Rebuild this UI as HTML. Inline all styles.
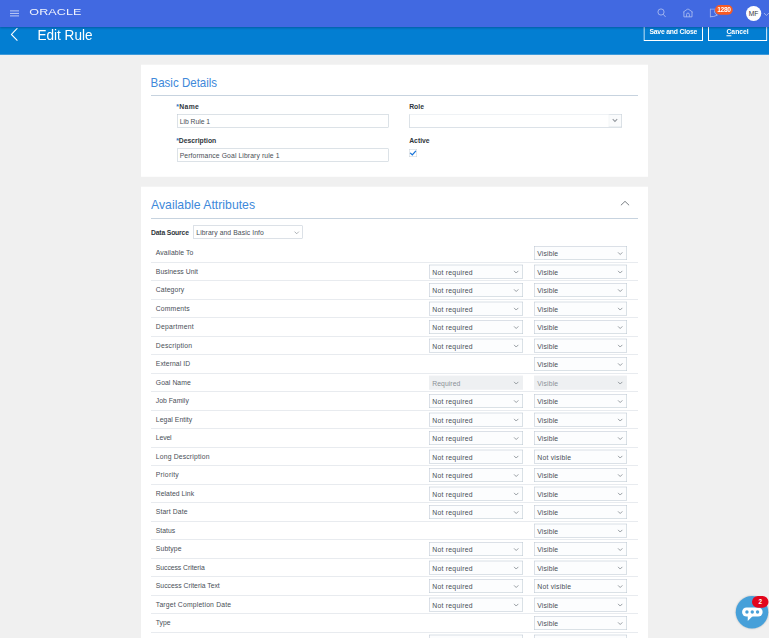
<!DOCTYPE html>
<html lang="en">
<head>
<meta charset="utf-8">
<title>Edit Rule</title>
<style>
html,body{margin:0;padding:0;}
body{width:769px;height:638px;overflow:hidden;background:#f0f0f0;font-family:"Liberation Sans",sans-serif;color:#3c4249;position:relative;}
*{box-sizing:border-box;}
.abs{position:absolute;}
#z{position:absolute;left:0;top:0;width:3076px;height:2552px;font-size:27.2px;transform:scale(.25);transform-origin:0 0;overflow:hidden;}
#topbar{position:absolute;left:0;top:0;width:3076px;height:108px;background:#4169e1;z-index:5;box-shadow:0 4px 8px rgba(0,0,40,.28);}
#bluebar{position:absolute;left:0;top:108px;width:3076px;height:110.8px;background:#037ed2;z-index:4;}
#logo{position:absolute;left:116.8px;top:26.4px;font-size:39.2px;line-height:40px;color:#fff;letter-spacing:0.4px;transform-origin:0 50%;transform:scaleX(1.28);font-weight:400;opacity:.93;}
#title{position:absolute;left:149.6px;top:104px;font-size:56px;transform:scaleX(0.9681);line-height:72px;color:#fff;white-space:nowrap;transform-origin:0 50%;}
.btn{position:absolute;top:80px;height:83.6px;border:4px solid #fff;color:#fff;font-weight:bold;font-size:27.2px;text-align:center;line-height:85.2px;white-space:nowrap;}
.panel{position:absolute;left:564px;width:2028px;background:#fff;}
.ptitle{position:absolute;left:37.6px;font-size:51.6px;line-height:64px;color:#4089da;white-space:nowrap;transform-origin:0 50%;}
.psep{position:absolute;left:40px;width:1948px;height:4px;background:#c7d3df;}
.flabel{position:absolute;font-weight:bold;font-size:27.2px;line-height:32px;color:#30363c;white-space:nowrap;}
.inp{position:absolute;height:52.8px;border:2.4px solid #b9c5d0;background:#fff;font-size:27.2px;line-height:50.4px;padding-left:8.8px;color:#4a4f55;white-space:nowrap;}
.row{position:absolute;left:40px;width:1948px;height:74px;border-bottom:2.4px solid #d0d7de;}
.lab{position:absolute;left:19.2px;top:20px;line-height:32px;font-size:27.2px;color:#484e56;white-space:nowrap;}
.sel{position:absolute;top:9.2px;height:54.8px;border:2.4px solid #b9c4cf;background:#fcfdfe;line-height:57.6px;font-size:27.2px;color:#484e56;white-space:nowrap;}
.sel span{position:absolute;left:11.2px;top:0;}
.s1{left:1112px;width:376px;}
.s2{left:1532px;width:372px;}
.sel.dis{background:#eef0f2;border-color:#eef0f2;color:#8b9197;}
.cv{position:absolute;right:14.8px;top:20px;width:21.6px;height:13.6px;overflow:visible;}
</style>
</head>
<body>
<div id="z">
<div id="topbar">
  <svg class="abs" style="left:40px;top:40px" width="40" height="28" viewBox="0 0 10 7"><path d="M0 .9H9M0 3.4H9M0 5.9H9" stroke="#e3e9fb" stroke-width=".8"/></svg>
  <div id="logo">ORACLE</div>
  <svg class="abs" style="left:2628px;top:32px" width="40" height="40" viewBox="0 0 10 10"><circle cx="4" cy="4" r="3.1" fill="none" stroke="#aebef1" stroke-width=".85"/><path d="M6.3 6.3L8.6 9" stroke="#aebef1" stroke-width=".85"/></svg>
  <svg class="abs" style="left:2730px;top:33.2px" width="44" height="40" viewBox="0 0 11 10"><path d="M.7 3.9L5.45 .6L10.2 3.9M1.4 3.5V8.6H9.5V3.5M4.05 8.6V6.2A1.4 1.4 0 0 1 6.85 6.2V8.6" fill="none" stroke="#aebef1" stroke-width=".85"/></svg>
  <svg class="abs" style="left:2838px;top:34px" width="36" height="40" viewBox="0 0 9 10"><path d="M.8 .5H6.4Q3.2 4 7.9 6.6Q4 8.6 .8 8.2M.8 .1V8.8" fill="none" stroke="#aebef1" stroke-width=".85" stroke-linejoin="round"/></svg>
  <div class="abs" style="left:2860px;top:20px;width:71.2px;height:39.2px;border-radius:20px;background:#f85a22;color:#fff;font-weight:bold;font-size:26.4px;line-height:39.2px;text-align:center;letter-spacing:-1.2px;">1280</div>
  <div class="abs" style="left:2984px;top:23.6px;width:60.8px;height:60.8px;border-radius:50%;background:#fdfdfd;color:#33373b;font-size:26.8px;line-height:61.6px;text-align:center;letter-spacing:-0.4px;">MF</div>
  <svg class="abs" style="left:3054px;top:50.4px" width="24" height="16" viewBox="0 0 6 4"><path d="M.4 .5L2.9 3L5.4 .5" fill="none" stroke="#b7c5f2" stroke-width=".8"/></svg>
</div>
<div id="bluebar">
  <svg class="abs" style="left:42.4px;top:1.6px" width="32" height="56" viewBox="0 0 8 14"><path d="M6.9 .6L.9 6.9L6.9 13.2" fill="none" stroke="#fff" stroke-width="1.1"/></svg>
</div>
<div id="title" style="z-index:6">Edit Rule</div>
<div class="btn" style="left:2574px;width:238px;z-index:4;letter-spacing:-0.73px">Save and Close</div>
<div class="btn" style="left:2832px;width:236.8px;z-index:4"><u style="text-underline-offset:5.2px;text-decoration-thickness:3.6px">C</u>ancel</div>

<div class="panel" style="top:259.2px;height:448px;">
  <div class="ptitle" style="top:38px;transform:scaleX(0.8938)">Basic Details</div>
  <div class="psep" style="top:121.2px"></div>
  <div class="flabel" style="left:140.8px;top:152.8px;letter-spacing:1.46px"><span style="color:#2c73c4">*</span>Name</div>
  <div class="inp" style="left:144px;top:197.6px;width:846px;line-height:53.6px;letter-spacing:-0.08px">Lib Rule 1</div>
  <div class="flabel" style="left:140.8px;top:288.8px;letter-spacing:-0.02px"><span style="color:#2c73c4">*</span>Description</div>
  <div class="inp" style="left:144px;top:334.8px;width:846px;letter-spacing:0.41px">Performance Goal Library rule 1</div>
  <div class="flabel" style="left:1072.8px;top:152.8px">Role</div>
  <div class="inp" style="left:1072.8px;top:197.6px;width:849.6px;border-top-color:#dfe5ea"><div class="abs" style="right:-2.4px;top:-2.4px;width:52px;height:52.8px;background:#fafbfc;border:2.4px solid #c3cdd7;border-left-color:#eef1f4"></div><svg class="abs" style="right:13.6px;top:16.4px;overflow:visible" width="21.6" height="12.8" viewBox="0 0 10 6"><path d="M.8 .8 L5 5 L9.2 .8" fill="none" stroke="#94999f" stroke-width="2.1"/></svg></div>
  <div class="flabel" style="left:1072.8px;top:288.8px">Active</div>
  <div class="abs" style="left:1072px;top:336.8px;width:32px;height:32px;border:2.4px solid #c9d1d9;background:#fff;"><svg class="abs" style="left:-2.4px;top:-2.4px;overflow:visible" width="32" height="32" viewBox="0 0 8 8"><path d="M1.1 3.9L3.3 5.8L6.9 1.8" fill="none" stroke="#1874d9" stroke-width="1.25"/></svg></div>
</div>

<div class="panel" style="top:746.8px;height:1840px;">
  <div class="ptitle" style="left:40px;top:39.2px;transform:scaleX(0.9506)">Available Attributes</div>
  <svg class="abs" style="left:1918.4px;top:56px;overflow:visible" width="36" height="20" viewBox="0 0 9 5"><path d="M.4 4.5L4.5 .6L8.6 4.5" fill="none" stroke="#6b7076" stroke-width=".9"/></svg>
  <div class="psep" style="top:124.8px"></div>
  <div class="flabel" style="left:40px;top:168px;letter-spacing:-0.68px">Data Source</div>
  <div class="sel" style="left:208.8px;top:155.2px;width:438.4px;height:52.8px;background:#fff"><span style="left:10.4px;top:-3.2px;letter-spacing:0.34px">Library and Basic Info</span><svg class="cv" style="right:12px" viewBox="0 0 10 6"><path d="M1 1 L5 5 L9 1" fill="none" stroke="#8a9096" stroke-width="1.3"/></svg></div>
  <div style="position:absolute;left:0;top:-746.8px;width:2028px;height:2552px;">
<div class="row" style="top:975.6px"><span class="lab" style="letter-spacing:0.43px">Available To</span><div class="sel s2"><span style="letter-spacing:0.62px">Visible</span><svg class="cv" viewBox="0 0 10 6"><path d="M1 1 L5 5 L9 1" fill="none" stroke="#888e94" stroke-width="1.6"/></svg></div></div>
<div class="row" style="top:1049.6px"><span class="lab" style="letter-spacing:0.2px">Business Unit</span><div class="sel s1"><span style="letter-spacing:1.03px">Not required</span><svg class="cv" viewBox="0 0 10 6"><path d="M1 1 L5 5 L9 1" fill="none" stroke="#888e94" stroke-width="1.6"/></svg></div><div class="sel s2"><span style="letter-spacing:0.62px">Visible</span><svg class="cv" viewBox="0 0 10 6"><path d="M1 1 L5 5 L9 1" fill="none" stroke="#888e94" stroke-width="1.6"/></svg></div></div>
<div class="row" style="top:1123.6px"><span class="lab" style="letter-spacing:0.45px">Category</span><div class="sel s1"><span style="letter-spacing:1.03px">Not required</span><svg class="cv" viewBox="0 0 10 6"><path d="M1 1 L5 5 L9 1" fill="none" stroke="#888e94" stroke-width="1.6"/></svg></div><div class="sel s2"><span style="letter-spacing:0.62px">Visible</span><svg class="cv" viewBox="0 0 10 6"><path d="M1 1 L5 5 L9 1" fill="none" stroke="#888e94" stroke-width="1.6"/></svg></div></div>
<div class="row" style="top:1197.6px"><span class="lab" style="letter-spacing:0.57px">Comments</span><div class="sel s1"><span style="letter-spacing:1.03px">Not required</span><svg class="cv" viewBox="0 0 10 6"><path d="M1 1 L5 5 L9 1" fill="none" stroke="#888e94" stroke-width="1.6"/></svg></div><div class="sel s2"><span style="letter-spacing:0.62px">Visible</span><svg class="cv" viewBox="0 0 10 6"><path d="M1 1 L5 5 L9 1" fill="none" stroke="#888e94" stroke-width="1.6"/></svg></div></div>
<div class="row" style="top:1271.6px"><span class="lab" style="letter-spacing:1.03px">Department</span><div class="sel s1"><span style="letter-spacing:1.03px">Not required</span><svg class="cv" viewBox="0 0 10 6"><path d="M1 1 L5 5 L9 1" fill="none" stroke="#888e94" stroke-width="1.6"/></svg></div><div class="sel s2"><span style="letter-spacing:0.62px">Visible</span><svg class="cv" viewBox="0 0 10 6"><path d="M1 1 L5 5 L9 1" fill="none" stroke="#888e94" stroke-width="1.6"/></svg></div></div>
<div class="row" style="top:1345.6px"><span class="lab" style="letter-spacing:0.91px">Description</span><div class="sel s1"><span style="letter-spacing:1.03px">Not required</span><svg class="cv" viewBox="0 0 10 6"><path d="M1 1 L5 5 L9 1" fill="none" stroke="#888e94" stroke-width="1.6"/></svg></div><div class="sel s2"><span style="letter-spacing:0.62px">Visible</span><svg class="cv" viewBox="0 0 10 6"><path d="M1 1 L5 5 L9 1" fill="none" stroke="#888e94" stroke-width="1.6"/></svg></div></div>
<div class="row" style="top:1419.6px"><span class="lab" style="letter-spacing:0.28px">External ID</span><div class="sel s2"><span style="letter-spacing:0.62px">Visible</span><svg class="cv" viewBox="0 0 10 6"><path d="M1 1 L5 5 L9 1" fill="none" stroke="#888e94" stroke-width="1.6"/></svg></div></div>
<div class="row" style="top:1493.6px"><span class="lab" style="letter-spacing:0.27px">Goal Name</span><div class="sel s1 dis"><span style="letter-spacing:0.25px">Required</span><svg class="cv" viewBox="0 0 10 6"><path d="M1 1 L5 5 L9 1" fill="none" stroke="#888e94" stroke-width="1.6"/></svg></div><div class="sel s2 dis"><span style="letter-spacing:0.62px">Visible</span><svg class="cv" viewBox="0 0 10 6"><path d="M1 1 L5 5 L9 1" fill="none" stroke="#888e94" stroke-width="1.6"/></svg></div></div>
<div class="row" style="top:1567.6px"><span class="lab" style="letter-spacing:0.06px">Job Family</span><div class="sel s1"><span style="letter-spacing:1.03px">Not required</span><svg class="cv" viewBox="0 0 10 6"><path d="M1 1 L5 5 L9 1" fill="none" stroke="#888e94" stroke-width="1.6"/></svg></div><div class="sel s2"><span style="letter-spacing:0.62px">Visible</span><svg class="cv" viewBox="0 0 10 6"><path d="M1 1 L5 5 L9 1" fill="none" stroke="#888e94" stroke-width="1.6"/></svg></div></div>
<div class="row" style="top:1641.6px"><span class="lab" style="letter-spacing:0.32px">Legal Entity</span><div class="sel s1"><span style="letter-spacing:1.03px">Not required</span><svg class="cv" viewBox="0 0 10 6"><path d="M1 1 L5 5 L9 1" fill="none" stroke="#888e94" stroke-width="1.6"/></svg></div><div class="sel s2"><span style="letter-spacing:0.62px">Visible</span><svg class="cv" viewBox="0 0 10 6"><path d="M1 1 L5 5 L9 1" fill="none" stroke="#888e94" stroke-width="1.6"/></svg></div></div>
<div class="row" style="top:1715.6px"><span class="lab" style="letter-spacing:-0.44px">Level</span><div class="sel s1"><span style="letter-spacing:1.03px">Not required</span><svg class="cv" viewBox="0 0 10 6"><path d="M1 1 L5 5 L9 1" fill="none" stroke="#888e94" stroke-width="1.6"/></svg></div><div class="sel s2"><span style="letter-spacing:0.62px">Visible</span><svg class="cv" viewBox="0 0 10 6"><path d="M1 1 L5 5 L9 1" fill="none" stroke="#888e94" stroke-width="1.6"/></svg></div></div>
<div class="row" style="top:1789.6px"><span class="lab" style="letter-spacing:0.7px">Long Description</span><div class="sel s1"><span style="letter-spacing:1.03px">Not required</span><svg class="cv" viewBox="0 0 10 6"><path d="M1 1 L5 5 L9 1" fill="none" stroke="#888e94" stroke-width="1.6"/></svg></div><div class="sel s2"><span style="letter-spacing:0.92px">Not visible</span><svg class="cv" viewBox="0 0 10 6"><path d="M1 1 L5 5 L9 1" fill="none" stroke="#888e94" stroke-width="1.6"/></svg></div></div>
<div class="row" style="top:1863.6px"><span class="lab" style="letter-spacing:1.02px">Priority</span><div class="sel s1"><span style="letter-spacing:1.03px">Not required</span><svg class="cv" viewBox="0 0 10 6"><path d="M1 1 L5 5 L9 1" fill="none" stroke="#888e94" stroke-width="1.6"/></svg></div><div class="sel s2"><span style="letter-spacing:0.62px">Visible</span><svg class="cv" viewBox="0 0 10 6"><path d="M1 1 L5 5 L9 1" fill="none" stroke="#888e94" stroke-width="1.6"/></svg></div></div>
<div class="row" style="top:1937.6px"><span class="lab" style="letter-spacing:0.17px">Related Link</span><div class="sel s1"><span style="letter-spacing:1.03px">Not required</span><svg class="cv" viewBox="0 0 10 6"><path d="M1 1 L5 5 L9 1" fill="none" stroke="#888e94" stroke-width="1.6"/></svg></div><div class="sel s2"><span style="letter-spacing:0.62px">Visible</span><svg class="cv" viewBox="0 0 10 6"><path d="M1 1 L5 5 L9 1" fill="none" stroke="#888e94" stroke-width="1.6"/></svg></div></div>
<div class="row" style="top:2011.6px"><span class="lab" style="letter-spacing:0.48px">Start Date</span><div class="sel s1"><span style="letter-spacing:1.03px">Not required</span><svg class="cv" viewBox="0 0 10 6"><path d="M1 1 L5 5 L9 1" fill="none" stroke="#888e94" stroke-width="1.6"/></svg></div><div class="sel s2"><span style="letter-spacing:0.62px">Visible</span><svg class="cv" viewBox="0 0 10 6"><path d="M1 1 L5 5 L9 1" fill="none" stroke="#888e94" stroke-width="1.6"/></svg></div></div>
<div class="row" style="top:2085.6px"><span class="lab" style="letter-spacing:0.01px">Status</span><div class="sel s2"><span style="letter-spacing:0.62px">Visible</span><svg class="cv" viewBox="0 0 10 6"><path d="M1 1 L5 5 L9 1" fill="none" stroke="#888e94" stroke-width="1.6"/></svg></div></div>
<div class="row" style="top:2159.6px"><span class="lab" style="letter-spacing:0.54px">Subtype</span><div class="sel s1"><span style="letter-spacing:1.03px">Not required</span><svg class="cv" viewBox="0 0 10 6"><path d="M1 1 L5 5 L9 1" fill="none" stroke="#888e94" stroke-width="1.6"/></svg></div><div class="sel s2"><span style="letter-spacing:0.62px">Visible</span><svg class="cv" viewBox="0 0 10 6"><path d="M1 1 L5 5 L9 1" fill="none" stroke="#888e94" stroke-width="1.6"/></svg></div></div>
<div class="row" style="top:2233.6px"><span class="lab" style="letter-spacing:-0.15px">Success Criteria</span><div class="sel s1"><span style="letter-spacing:1.03px">Not required</span><svg class="cv" viewBox="0 0 10 6"><path d="M1 1 L5 5 L9 1" fill="none" stroke="#888e94" stroke-width="1.6"/></svg></div><div class="sel s2"><span style="letter-spacing:0.62px">Visible</span><svg class="cv" viewBox="0 0 10 6"><path d="M1 1 L5 5 L9 1" fill="none" stroke="#888e94" stroke-width="1.6"/></svg></div></div>
<div class="row" style="top:2307.6px"><span class="lab" style="letter-spacing:0.05px">Success Criteria Text</span><div class="sel s1"><span style="letter-spacing:1.03px">Not required</span><svg class="cv" viewBox="0 0 10 6"><path d="M1 1 L5 5 L9 1" fill="none" stroke="#888e94" stroke-width="1.6"/></svg></div><div class="sel s2"><span style="letter-spacing:0.92px">Not visible</span><svg class="cv" viewBox="0 0 10 6"><path d="M1 1 L5 5 L9 1" fill="none" stroke="#888e94" stroke-width="1.6"/></svg></div></div>
<div class="row" style="top:2381.6px"><span class="lab" style="letter-spacing:0.73px">Target Completion Date</span><div class="sel s1"><span style="letter-spacing:1.03px">Not required</span><svg class="cv" viewBox="0 0 10 6"><path d="M1 1 L5 5 L9 1" fill="none" stroke="#888e94" stroke-width="1.6"/></svg></div><div class="sel s2"><span style="letter-spacing:0.62px">Visible</span><svg class="cv" viewBox="0 0 10 6"><path d="M1 1 L5 5 L9 1" fill="none" stroke="#888e94" stroke-width="1.6"/></svg></div></div>
<div class="row" style="top:2455.6px"><span class="lab" style="letter-spacing:-0.05px">Type</span><div class="sel s2"><span style="letter-spacing:0.62px">Visible</span><svg class="cv" viewBox="0 0 10 6"><path d="M1 1 L5 5 L9 1" fill="none" stroke="#888e94" stroke-width="1.6"/></svg></div></div>
<div class="row" style="top:2529.6px"><span class="lab" style="letter-spacing:1.31px">Weight</span><div class="sel s1"><span style="letter-spacing:1.03px">Not required</span><svg class="cv" viewBox="0 0 10 6"><path d="M1 1 L5 5 L9 1" fill="none" stroke="#888e94" stroke-width="1.6"/></svg></div><div class="sel s2"><span style="letter-spacing:0.62px">Visible</span><svg class="cv" viewBox="0 0 10 6"><path d="M1 1 L5 5 L9 1" fill="none" stroke="#888e94" stroke-width="1.6"/></svg></div></div>
  </div>
</div>

<div class="abs" style="left:2943.2px;top:2384px;width:129.6px;height:129.6px;border-radius:50%;background:#47a0d9;box-shadow:0 0 8px rgba(0,0,0,.25);">
  <svg class="abs" style="left:0;top:0" width="129.6" height="129.6" viewBox="0 0 32.4 32.4"><rect x="6.3" y="11.5" width="20.6" height="9" rx="4.5" fill="#fff"/><path d="M12 19.5V25L17.5 19.5Z" fill="#fff"/><circle cx="11.2" cy="16" r="1.7" fill="#47a0d9"/><circle cx="16.5" cy="16" r="1.7" fill="#47a0d9"/><circle cx="21.8" cy="16" r="1.7" fill="#47a0d9"/></svg>
</div>
<div class="abs" style="left:3008px;top:2384px;width:65.6px;height:47.2px;border-radius:24px;background:#e2061c;color:#fff;font-weight:bold;font-size:25.6px;line-height:47.2px;text-align:center;">2</div>
</div>
</body>
</html>
